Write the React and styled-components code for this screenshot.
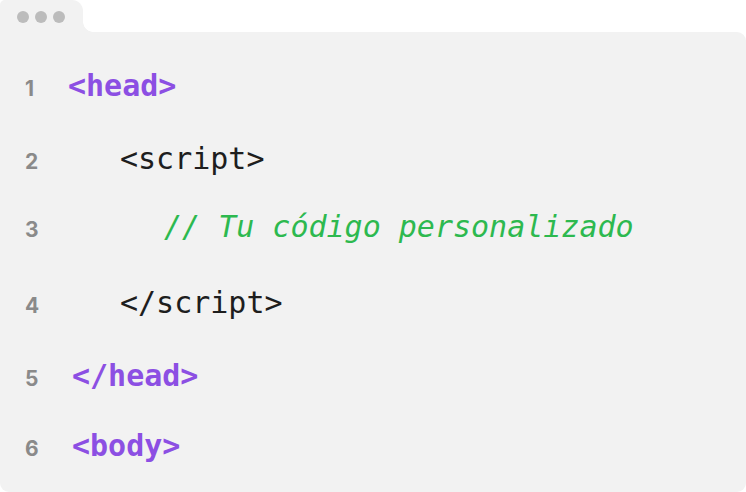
import React from "react";
import styled, { createGlobalStyle } from "styled-components";

const Global = createGlobalStyle`
  html, body { margin: 0; padding: 0; background: #ffffff; }
  body { width: 746px; height: 492px; overflow: hidden; }
`;

const PANEL = "#f2f2f2";

const Frame = styled.div`
  display: flex;
  flex-direction: column;
  width: 746px;
  height: 492px;
`;

const Tab = styled.div`
  position: relative;
  display: flex;
  align-items: center;
  gap: 6px;
  width: 83px;
  height: 32px;
  box-sizing: border-box;
  padding: 2px 0 0 17px;
  background: ${PANEL};
  border-radius: 5px 11px 0 0;
  &::after {
    content: "";
    position: absolute;
    right: -10px;
    bottom: 0;
    width: 10px;
    height: 10px;
    background: radial-gradient(circle at 100% 0, transparent 9.5px, ${PANEL} 10px);
  }
`;

const Dot = styled.span`
  width: 12px;
  height: 12px;
  border-radius: 50%;
  background: #bcbcbc;
`;

const Panel = styled.div`
  flex: 1;
  background: ${PANEL};
  border-radius: 0 9px 9px 9px;
  padding-top: 18px;
  box-sizing: border-box;
`;

const Row = styled.div`
  display: flex;
  align-items: baseline;
  height: ${(p) => p.$h}px;
  line-height: 72px;
`;

const Num = styled.span`
  width: 67px;
  box-sizing: border-box;
  padding-left: 25px;
  font-family: "Inter", "Liberation Sans", sans-serif;
  font-weight: 700;
  font-size: 21px;
  color: #8a8a8a;
`;

const Code = styled.span`
  padding-left: ${(p) => p.$indent}px;
  font-family: "DejaVu Sans Mono", "Liberation Mono", monospace;
  font-size: 30px;
  white-space: pre;
  color: ${(p) =>
    p.$kind === "tag" ? "#8c4fe3" : p.$kind === "comment" ? "#2db94f" : "#1e1e1e"};
  font-weight: ${(p) => (p.$kind === "tag" ? 700 : 400)};
  font-style: ${(p) => (p.$kind === "comment" ? "italic" : "normal")};
`;

const lines = [
  { n: 1, text: "<head>", kind: "tag", indent: 1, h: 73 },
  { n: 2, text: "<script>", kind: "plain", indent: 53, h: 68 },
  { n: 3, text: "// Tu código personalizado", kind: "comment", indent: 97, h: 76 },
  { n: 4, text: "</script>", kind: "plain", indent: 53, h: 73 },
  { n: 5, text: "</head>", kind: "tag", indent: 5, h: 70 },
  { n: 6, text: "<body>", kind: "tag", indent: 5, h: 72 },
];

export default function App() {
  return (
    <>
      <Global />
      <Frame>
        <Tab>
          <Dot />
          <Dot />
          <Dot />
        </Tab>
        <Panel>
          {lines.map((l) => (
            <Row key={l.n} $h={l.h}>
              <Num>{l.n}</Num>
              <Code $kind={l.kind} $indent={l.indent}>
                {l.text}
              </Code>
            </Row>
          ))}
        </Panel>
      </Frame>
    </>
  );
}
